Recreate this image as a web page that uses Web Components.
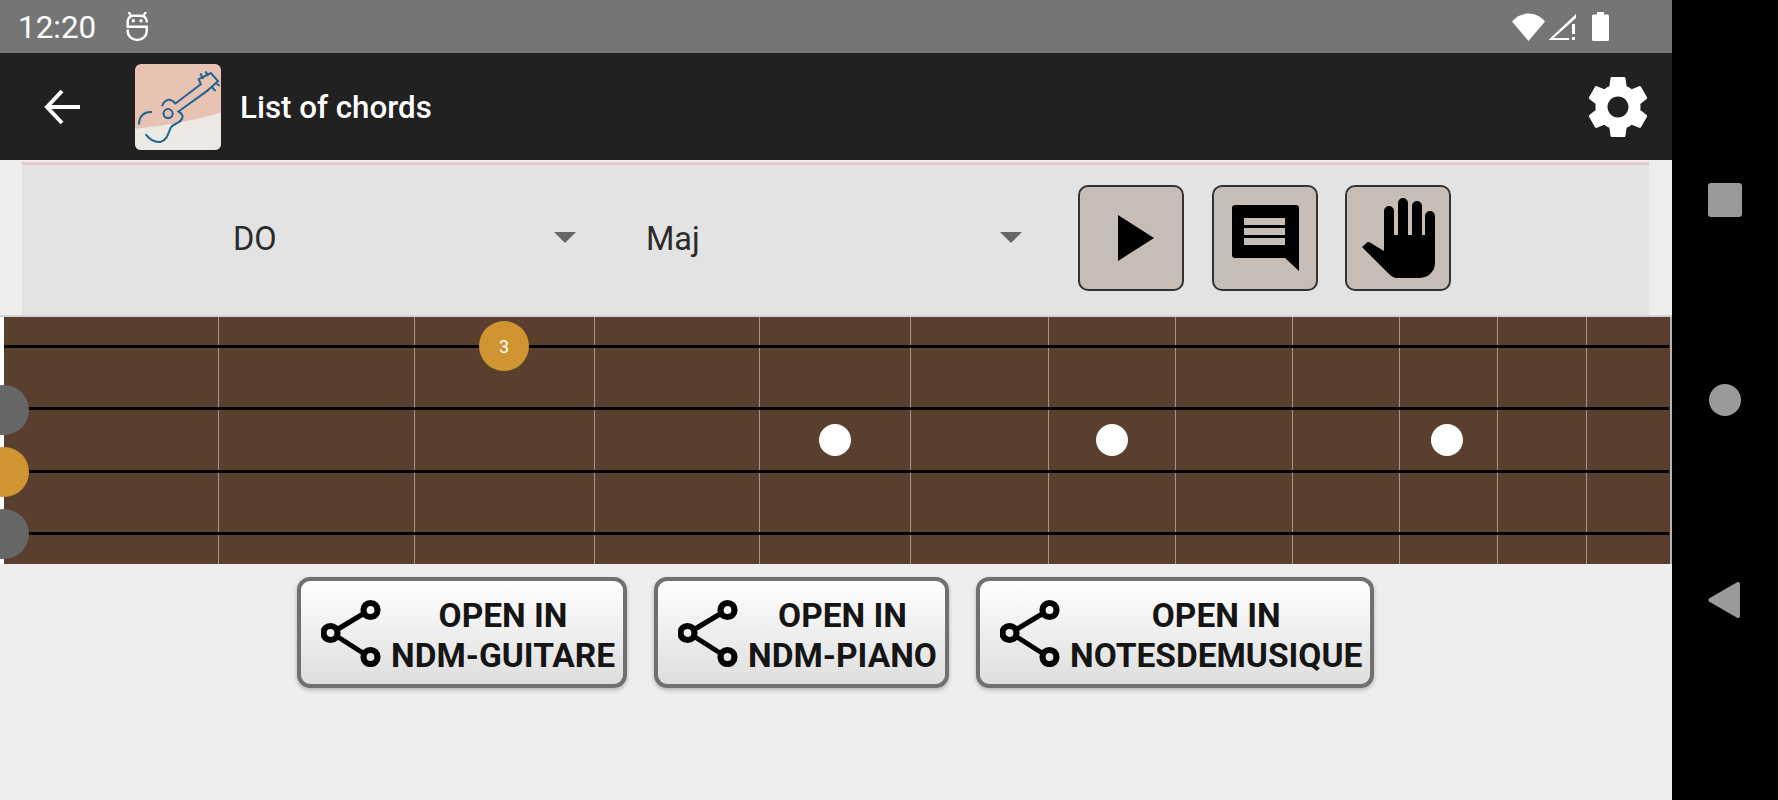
<!DOCTYPE html>
<html>
<head>
<meta charset="utf-8">
<title>List of chords</title>
<style>
    html, body { margin: 0; height: 100%; background: #000; overflow: hidden; font-family: Roboto, sans-serif; }
    body { display: flex; width: 1778px; height: 800px; }
    .screen { width: 1672px; height: 800px; display: flex; flex-direction: column; background: #eeeeee; }
    .open-row { display: flex; justify-content: center; gap: 27px; margin-top: 13px; padding-right: 1px; }
</style>
</head>
<body>
<div class="screen">
    <status-bar time="12:20"></status-bar>
    <app-bar title="List of chords"></app-bar>
    <chord-controls>
        <chord-select value="DO" style="--text-left: 211px; --caret-left: 532px; width: 600px"></chord-select>
        <chord-select value="Maj" style="--text-left: 24px; --caret-left: 378px; width: 456px"></chord-select>
        <icon-button icon="play"></icon-button>
        <icon-button icon="message"></icon-button>
        <icon-button icon="hand"></icon-button>
    </chord-controls>
    <fret-board></fret-board>
    <div class="open-row">
        <open-button style="width:330px"><span>OPEN IN</span><span>NDM-GUITARE</span></open-button>
        <open-button style="width:295px"><span>OPEN IN</span><span>NDM-PIANO</span></open-button>
        <open-button style="width:398px"><span>OPEN IN</span><span>NOTESDEMUSIQUE</span></open-button>
    </div>
</div>
<nav-bar></nav-bar>

<script>
class StatusBar extends HTMLElement {
    connectedCallback() {
        this.attachShadow({ mode: 'open' });
        this.shadowRoot.innerHTML = `
            <style>
                :host { display: flex; align-items: center; height: 53px; background: #757575; color: #fff; font: 400 31.400px Roboto, sans-serif; padding-left: 18px; box-sizing: border-box; }
                .time { padding-top: 2px; }
                .robot { margin-left: 30px; }
                .right { margin-left: auto; display: flex; align-items: center; margin-right: 63px; }
                svg { display: block; }
            </style>
            <span class="time">${this.getAttribute('time')}</span>
            <svg class="robot" width="24" height="30" viewBox="0 0 24 30" fill="none" stroke="#fff" stroke-width="2.400">
                <path d="M3 .5 L4.500 3 M19.500 .5 L18 3" stroke-linecap="round"/>
                <path d="M20.700 10.500 V9 A6 5.500 0 0 0 14.700 3.700 H7.700 A6 5.500 0 0 0 1.700 9 V14.700 H20.700 V19 A9.500 9 0 0 1 1.700 19 V17.500"/>
                <circle cx="7.300" cy="8.700" r="1.700" fill="#fff" stroke="none"/>
                <circle cx="15" cy="8.700" r="1.700" fill="#fff" stroke="none"/>
            </svg>
            <div class="right">
                <svg width="33" height="28" viewBox="0 0 33 28"><path d="M0 8.500 C4 3.500 10 0.500 16.500 0.500 C23 0.500 29 3.500 33 8.500 L16.500 28 Z" fill="#fff"/></svg>
                <svg style="margin-left:3px" width="29" height="28" viewBox="0 0 29 28"><path d="M28 1 V5 L5.500 25 H21 V27 H0.500 Z" fill="#fff"/><path d="M24 11 h3 v10 h-3 z M24 24 h3 v3 h-3 z" fill="#fff"/></svg>
                <svg style="margin-left:15px" width="17" height="29" viewBox="0 0 17 29"><path d="M5 0 H12 V2.500 H15.500 A1.500 1.500 0 0 1 17 4 V27.500 A1.500 1.500 0 0 1 15.500 29 H1.500 A1.500 1.500 0 0 1 0 27.500 V4 A1.500 1.500 0 0 1 1.500 2.500 H5 Z" fill="#fff"/></svg>
            </div>
        `;
    }
}
customElements.define('status-bar', StatusBar);

class AppBar extends HTMLElement {
    connectedCallback() {
        this.attachShadow({ mode: 'open' });
        this.shadowRoot.innerHTML = `
            <style>
                :host { display: flex; align-items: center; height: 107px; background: #212121; color: #fff; font: 500 31.300px Roboto, sans-serif; }
                .back { margin-left: 44px; display: block; }
                .logo { margin-left: 55px; display: block; border-radius: 6px; }
                .title { margin-left: 19px; padding-top: 2px; }
                .gear { margin-left: auto; margin-right: 18px; display: block; }
            </style>
            <svg class="back" width="36" height="36" viewBox="0 0 36 36" fill="none" stroke="#fff" stroke-width="4"><path d="M36 18 H3 M18 2 L3 18 L18 34"/></svg>
            <svg class="logo" width="86" height="86" viewBox="0 0 85 85">
                <rect width="85" height="85" fill="#e8c2b3"/>
                <path d="M0 64 Q45 60 85 48 V85 H0 Z" fill="#ece9e4"/>
                <g fill="none" stroke="#1d6491" stroke-width="2" stroke-linecap="round">
                    <path d="M16 47.500 C9 47 4 52 4 59"/>
                    <path d="M11 70 C15 75 20 77.500 25 77 C33 75 33 66 36 62 C40 58 47 58 47 52 C47 49 45 48 43 47 L72 26"/>
                    <path d="M27 41 C28 37 33 34 36 36 C38 37 39 38 40 39 L65 20"/>
                    <circle cx="32.700" cy="49" r="4.500"/>
                    <path d="M65 20 L63 15 L75 9 L82 17 L72 26 M67 14 L65 10 M72 11 L70 8 M76 23 L79 26 M80 19 L83 21"/>
                </g>
            </svg>
            <span class="title">${this.getAttribute('title')}</span>
            <svg class="gear" width="72" height="72" viewBox="0 0 24 24" fill="#fff"><path d="M19.430 12.980c.04-.32.07-.64.07-.98s-.03-.66-.07-.98l2.110-1.650c.19-.15.24-.42.12-.64l-2-3.460c-.12-.22-.39-.3-.61-.22l-2.490 1c-.52-.4-1.080-.73-1.690-.98l-.38-2.650C14.460 2.180 14.250 2 14 2h-4c-.25 0-.46.18-.49.42l-.38 2.650c-.61.25-1.170.59-1.690.98l-2.490-1c-.23-.09-.49 0-.61.22l-2 3.460c-.13.22-.07.49.12.64l2.110 1.650c-.04.32-.07.65-.07.98s.03.66.07.98l-2.110 1.650c-.19.15-.24.42-.12.64l2 3.460c.12.22.39.3.61.22l2.490-1c.52.4 1.080.73 1.690.98l.38 2.650c.03.24.24.42.49.42h4c.25 0 .46-.18.49-.42l.38-2.650c.61-.25 1.170-.59 1.690-.98l2.490 1c.23.09.49 0 .61-.22l2-3.460c.12-.22.07-.49-.12-.64l-2.110-1.650zM12 15.500c-1.930 0-3.500-1.570-3.500-3.500s1.570-3.500 3.500-3.500 3.500 1.570 3.500 3.500-1.570 3.500-3.500 3.500z"/></svg>
        `;
    }
}
customElements.define('app-bar', AppBar);

class ChordControls extends HTMLElement {
    connectedCallback() {
        this.attachShadow({ mode: 'open' });
        this.shadowRoot.innerHTML = `
            <style>
                :host { display: flex; align-items: center; box-sizing: border-box; height: 153px; margin: 2px 23px 0 22px; padding-bottom: 4px; background: #e3e3e3; border-top: 3px solid #e6c9c6; }
                ::slotted(icon-button) { margin-right: 27.500px; flex: none; }
                ::slotted(chord-select) { flex: none; }
            </style>
            <slot></slot>
        `;
    }
}
customElements.define('chord-controls', ChordControls);

class ChordSelect extends HTMLElement {
    connectedCallback() {
        this.attachShadow({ mode: 'open' });
        this.shadowRoot.innerHTML = `
            <style>
                :host { display: block; position: relative; height: 60px; font: 400 32.500px Roboto, sans-serif; color: #2b2b2b; line-height: 62px; box-sizing: border-box; }
                .val { margin-left: var(--text-left); }
                .caret { position: absolute; left: var(--caret-left); top: 24px; width: 0; height: 0; border-left: 11px solid transparent; border-right: 11px solid transparent; border-top: 11px solid #666; }
            </style>
            <div class="val">${this.getAttribute('value')}</div>
            <div class="caret"></div>
        `;
    }
}
customElements.define('chord-select', ChordSelect);

const BUTTON_ICONS = {
    play: '<path d="M40 30 L76 53 L40 76 Z"/>',
    message: '<path fill-rule="evenodd" d="M23 20 H84 A3 3 0 0 1 87 23 V86 L73 73 H23 A3 3 0 0 1 20 70 V23 A3 3 0 0 1 23 20 Z M32 33 V40 H73 V33 Z M32 43 V50 H73 V43 Z M32 53 V60 H73 V53 Z"/>',
    hand: '<path d="M17 62 L22 57.500 Q23.500 56.500 25 57.500 L39 66 V26 a5 5 0 0 1 10 0 V50 H53 V18 a5 5 0 0 1 10 0 V50 H67 V21 a5 5 0 0 1 10 0 V50 H80 V31 a5 5 0 0 1 10 0 V78 a15 15 0 0 1 -15 15 H52 Q48 93 44 89 Z"/>'
};

class IconButton extends HTMLElement {
    connectedCallback() {
        this.attachShadow({ mode: 'open' });
        this.shadowRoot.innerHTML = `
            <style>
                :host { display: block; box-sizing: border-box; width: 106px; height: 106px; background: #c6bdb7; border: 2px solid #333; border-radius: 10px; }
                svg { display: block; margin: -2px; }
            </style>
            <svg width="106" height="106" viewBox="0 0 106 106">${BUTTON_ICONS[this.getAttribute('icon')]}</svg>
        `;
    }
}
customElements.define('icon-button', IconButton);

class FretBoard extends HTMLElement {
    connectedCallback() {
        const frets = [219, 415, 595, 760, 911, 1049, 1176, 1293, 1400, 1498, 1587, 1670];
        let prev = 4;
        const cols = frets.map(x => { const w = x - prev; prev = x; return w + 'px'; }).join(' ');
        this.attachShadow({ mode: 'open' });
        this.shadowRoot.innerHTML = `
            <style>
                :host { display: block; position: relative; box-sizing: border-box; height: 249px; border-top: 2px solid #d2d2d2; padding-left: 4px; background: linear-gradient(90deg, #fff 4px, transparent 4px); }
                .frets { display: grid; grid-template-columns: ${cols}; height: 247px; width: 1668px; box-sizing: border-box; background: #5a3f2e; border-right: 2px solid #b5b5b5; }
                .frets div { border-right: 1px solid #a3958a; }
                .frets div:last-child { border-right: 0; }
                .strings { position: absolute; left: 4px; right: 3px; top: 28px; display: flex; flex-direction: column; gap: 59.300px; }
                .strings div { height: 3px; background: #000; }
                .dot { position: absolute; border-radius: 50%; display: flex; align-items: center; justify-content: center; }
                .inlay { width: 32px; height: 32px; background: #fff; top: 107px; }
                .open { width: 50px; height: 50px; left: -21px; }
                .note { width: 50px; height: 50px; left: 479px; top: 4px; background: #d09530; color: #fff; font: 400 18px Roboto, sans-serif; }
            </style>
            <div class="frets">${frets.map(() => '<div></div>').join('')}</div>
            <div class="strings"><div></div><div></div><div></div><div></div></div>
            <div class="dot inlay" style="left:819px"></div>
            <div class="dot inlay" style="left:1096px"></div>
            <div class="dot inlay" style="left:1431px"></div>
            <div class="dot open" style="top:68px;background:#666"></div>
            <div class="dot open" style="top:130px;background:#d09530"></div>
            <div class="dot open" style="top:192px;background:#666"></div>
            <div class="dot note">3</div>
        `;
    }
}
customElements.define('fret-board', FretBoard);

class OpenButton extends HTMLElement {
    connectedCallback() {
        this.attachShadow({ mode: 'open' });
        this.shadowRoot.innerHTML = `
            <style>
                :host { display: flex; align-items: center; box-sizing: border-box; height: 111px; border: 4px solid #707070; border-radius: 13px; background: linear-gradient(#fff, #dedede); box-shadow: 0 2px 4px rgba(0,0,0,.25); padding: 0 8px 0 20px; color: #151515; font: 700 33.500px/40px Roboto, sans-serif; }
                svg { flex: none; display: block; }
                .text { flex: 1; display: flex; flex-direction: column; align-items: center; white-space: nowrap; margin-left: 10px; padding-top: 7px; }
            </style>
            <svg width="60" height="68" viewBox="0 0 60 68" fill="none" stroke="#000">
                <path d="M17 30 L42 15 M17 38 L42 54" stroke-width="5"/>
                <circle cx="9.500" cy="34" r="7" stroke-width="6.200"/>
                <circle cx="49.500" cy="11" r="7" stroke-width="6.200"/>
                <circle cx="49.500" cy="58" r="7" stroke-width="6.200"/>
            </svg>
            <div class="text"><slot></slot></div>
        `;
    }
}
customElements.define('open-button', OpenButton);

class NavBar extends HTMLElement {
    connectedCallback() {
        this.attachShadow({ mode: 'open' });
        this.shadowRoot.innerHTML = `
            <style>
                :host { display: flex; flex-direction: column; align-items: center; width: 106px; height: 800px; background: #000; box-sizing: border-box; padding-top: 183px; }
                .square { width: 34px; height: 34px; border-radius: 3px; background: #9a9a9a; }
                .circle { width: 32px; height: 32px; border-radius: 50%; background: #9a9a9a; margin-top: 167px; }
                svg { display: block; margin-top: 166px; margin-left: -2px; }
            </style>
            <div class="square"></div>
            <div class="circle"></div>
            <svg width="32" height="36" viewBox="0 0 32 36"><path d="M1 16.500 L29 0.300 Q32 -.5 32 2 V34 Q32 36.500 29 35.700 L1 19.500 Q-.5 18 1 16.500 Z" fill="#9a9a9a"/></svg>
        `;
    }
}
customElements.define('nav-bar', NavBar);
</script>
</body>
</html>
